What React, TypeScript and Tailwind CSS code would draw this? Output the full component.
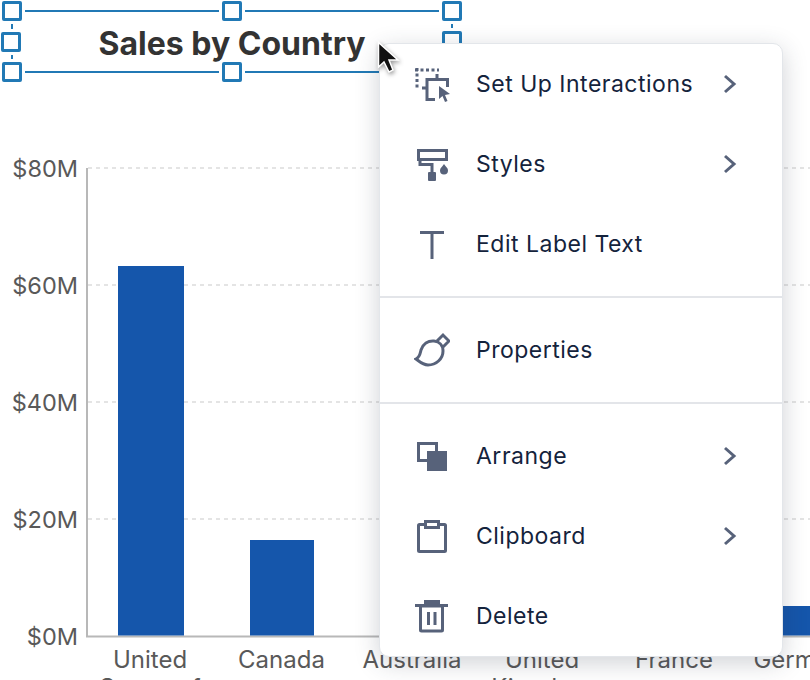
import type { ReactNode } from "react";

const ICON_BLUE = "#57627a";

/** Resize handles of the selected label. */
const handles = [
  "-left-[11px] -top-[11px]",
  "left-1/2 -ml-[10px] -top-[11px]",
  "-right-[11px] -top-[11px]",
  "-left-[12px] top-1/2 -mt-[10px]",
  "-right-[11px] top-1/2 -mt-[11px]",
  "-left-[11px] -bottom-[11px]",
  "left-1/2 -ml-[10px] -bottom-[11px]",
];

function SelectedTitle() {
  return (
    <div className="relative ml-[11px] flex h-[63px] w-[442px] items-center justify-center border-2 border-[#2179b5]">
      <h1 className="pt-[4px] text-[32px] font-bold leading-9 text-[#333333]">Sales by Country</h1>
      {handles.map((pos) => (
        <span
          key={pos}
          className={`absolute h-5 w-5 rounded-[2px] border-[3px] border-[#2179b5] bg-white ring-[3px] ring-white ${pos}`}
        />
      ))}
    </div>
  );
}

const gridLines = [
  { y: 168, label: "$80M" },
  { y: 285, label: "$60M" },
  { y: 402, label: "$40M" },
  { y: 519, label: "$20M" },
  { y: 636, label: "$0M" },
];

const bars = [
  { x: 118, w: 66, top: 266 },
  { x: 250, w: 64, top: 540 },
  { x: 783, w: 66, top: 606 },
];

const categories = [
  { x: 150, lines: ["United", "States of"] },
  { x: 281.5, lines: ["Canada"] },
  { x: 412, lines: ["Australia"] },
  { x: 542, lines: ["United", "Kingdom"] },
  { x: 674, lines: ["France"] },
  { x: 805, lines: ["Germany"] },
];

function Chart() {
  return (
    <svg viewBox="0 73 810 607" className="block h-[607px] w-[810px]" fontFamily="Inter, sans-serif" fontSize="24">
      {gridLines.slice(0, 4).map((g) => (
        <line key={g.y} x1="88" x2="810" y1={g.y} y2={g.y} stroke="#dcdcdc" strokeWidth="1.5" strokeDasharray="4 4" />
      ))}
      <path d="M87 168V636.5H810" fill="none" stroke="#b8b8b8" strokeWidth="2" />
      {bars.map((b) => (
        <rect key={b.x} x={b.x} y={b.top} width={b.w} height={635.5 - b.top} fill="#1556ab" />
      ))}
      {gridLines.map((g) => (
        <text key={g.label} x="78" y={g.y + 9} textAnchor="end" fontSize="23.5" fill="#595959">
          {g.label}
        </text>
      ))}
      {categories.map((c) =>
        c.lines.map((line, i) => (
          <text key={line} x={c.x} y={668 + i * 28} textAnchor="middle" fill="#595959">
            {line}
          </text>
        )),
      )}
    </svg>
  );
}

function Icon({ children }: { children: ReactNode }) {
  return (
    <svg viewBox="0 0 36 36" className="h-9 w-9 shrink-0" fill="none" stroke={ICON_BLUE} strokeWidth="3">
      {children}
    </svg>
  );
}

const InteractionsIcon = (
  <Icon>
    <path d="M1 4H25M3 2V24" strokeDasharray="3 2.5" />
    <path d="M13 22V13.5H33.5V21M23 13V8M8 22H13M13 21V33.5H21" />
    <path d="M25 20L36 28L31 29L33.5 35L31 36L28.5 30L25 33Z" fill={ICON_BLUE} stroke="none" />
  </Icon>
);

const StylesIcon = (
  <Icon>
    <rect x="4.5" y="4.5" width="28" height="9" />
    <path d="M6 14V18.5H18V27" />
    <rect x="14" y="26" width="8" height="9" rx="1" fill={ICON_BLUE} stroke="none" />
    <path d="M30 18C32 21 34 22 34 24.5A4 4 0 0 1 26 24.5C26 22 28 21 30 18Z" fill={ICON_BLUE} stroke="none" />
  </Icon>
);

const TextIcon = (
  <Icon>
    <path d="M6 6.5H30M18 6.5V33" />
  </Icon>
);

const BrushIcon = (
  <Icon>
    <path d="M2 27C6 25 6 22 7 18C9 12 14 8.5 20 9C25 9.5 29 13 29 19C29 27 22 33 14 33C9 33 6 30 2 27Z" />
    <path d="M23 9L29 3L35 9L29 15" />
  </Icon>
);

const ArrangeIcon = (
  <Icon>
    <rect x="4.5" y="5.5" width="18" height="17" />
    <rect x="13" y="13" width="20" height="20" fill={ICON_BLUE} stroke="none" />
  </Icon>
);

const ClipboardIcon = (
  <Icon>
    <rect x="4.5" y="6.5" width="27" height="27" rx="1" />
    <rect x="11.5" y="3.5" width="13" height="6" fill="white" />
  </Icon>
);

const TrashIcon = (
  <Icon>
    <path d="M1 7.5H34" />
    <rect x="10" y="2" width="16" height="5" fill={ICON_BLUE} stroke="none" />
    <rect x="6.5" y="8" width="22" height="25" rx="1" />
    <path d="M14.5 14V27M21 14V27" />
  </Icon>
);

interface MenuRowProps {
  icon: ReactNode;
  label: string;
  submenu?: boolean;
}

function MenuRow({ icon, label, submenu }: MenuRowProps) {
  return (
    <div className="flex h-20 items-center pl-[34px] pr-[45px]">
      {icon}
      <span className="ml-[26px] flex-1 text-[23px] font-normal tracking-[0.5px] text-[#14233c]">{label}</span>
      {submenu && (
        <svg viewBox="0 0 14 20" className="h-5 w-[14px]" fill="none" stroke={ICON_BLUE} strokeWidth="3">
          <path d="M2 2L11 10L2 18" />
        </svg>
      )}
    </div>
  );
}

function ContextMenu() {
  return (
    <div className="absolute left-[379px] top-[43px] w-[404px] rounded-[10px] border border-[#e3e6ea] bg-white font-['Inter',sans-serif] shadow-[0_6px_24px_rgba(40,50,70,0.22)]">
      <div className="border-b-2 border-[#e3e5e9] pb-3">
        <MenuRow icon={InteractionsIcon} label="Set Up Interactions" submenu />
        <MenuRow icon={StylesIcon} label="Styles" submenu />
        <MenuRow icon={TextIcon} label="Edit Label Text" />
      </div>
      <div className="border-b-2 border-[#e3e5e9] py-3">
        <MenuRow icon={BrushIcon} label="Properties" />
      </div>
      <div className="pt-3">
        <MenuRow icon={ArrangeIcon} label="Arrange" submenu />
        <MenuRow icon={ClipboardIcon} label="Clipboard" submenu />
        <MenuRow icon={TrashIcon} label="Delete" />
      </div>
    </div>
  );
}

function MouseCursor() {
  return (
    <svg viewBox="0 0 24 34" className="absolute left-[376px] top-[40px] h-[34px] w-6 drop-shadow-[1px_2px_2px_rgba(0,0,0,0.4)]">
      <path d="M2.5 2.5V27L8 22L13 32L17 30L13 20H22Z" fill="#111111" stroke="white" strokeWidth="1.5" />
    </svg>
  );
}

export default function App() {
  return (
    <div className="relative h-[680px] w-[810px] overflow-hidden bg-white pt-[10px] font-['Inter',sans-serif]">
      <SelectedTitle />
      <Chart />
      <ContextMenu />
      <MouseCursor />
    </div>
  );
}
